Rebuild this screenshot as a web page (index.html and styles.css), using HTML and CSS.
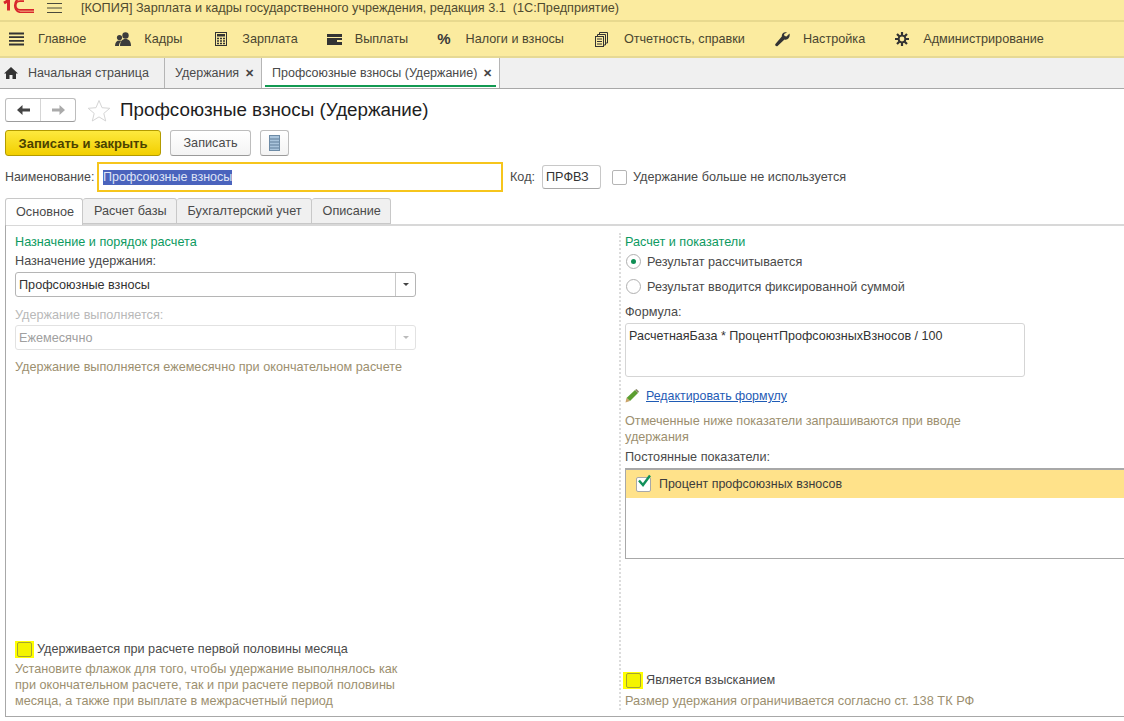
FILE: index.html
```html
<!DOCTYPE html>
<html lang="ru">
<head>
    <meta charset="UTF-8">
    <title>Профсоюзные взносы (Удержание)</title>
    <link rel="stylesheet" href="styles.css">
</head>
<body>
    <!-- Title bar -->
    <div class="titlebar">
        <svg class="logo" width="35" height="13" viewBox="0 0 35 13" fill="none" stroke="#d8262c">
            <path d="M4 3 8.500 .5V10.500" stroke-width="3"/>
            <path d="M24 1.200H20A4.300 4.300 0 0 0 20 9.800H34" stroke-width="1.800"/>
            <path d="M24 -1.500H20A7.200 7.200 0 0 0 20 12.300H34" stroke-width="1.800"/>
        </svg>
        <svg class="burger" width="15" height="12" viewBox="0 0 15 12"><path d="M0 1.500H15M0 6H15M0 10.500H15" stroke="#4a4a3c" stroke-width="1"/></svg>
        <span class="title-text">[КОПИЯ] Зарплата и кадры государственного учреждения, редакция 3.1&nbsp; (1С:Предприятие)</span>
    </div>

    <!-- Sections menu -->
    <div class="menubar">
        <div class="menu-item m1">
            <svg width="15" height="14" viewBox="0 0 15 14"><path d="M0 1.500H15M0 5.200H15M0 8.800H15M0 12.500H15" stroke="#333" stroke-width="1.800"/></svg>
            <span>Главное</span>
        </div>
        <div class="menu-item m2">
            <svg width="16" height="14" viewBox="0 0 16 14" fill="#3c3c3c"><circle cx="10.500" cy="3.500" r="3.200"/><path d="M5 14c0-4.500 2-7 5.500-7s5.500 2.500 5.500 7z"/><circle cx="4.500" cy="5.500" r="2.600"/><path d="M0 14c0-3.500 1.500-5.500 4.500-5.500.8 0 1.300.1 1.800.4C4.800 10 4 11.800 4 14z"/></svg>
            <span>Кадры</span>
        </div>
        <div class="menu-item m3">
            <svg width="12" height="14" viewBox="0 0 12 14"><rect x=".5" y=".5" width="11" height="13" fill="none" stroke="#333"/><rect x="2" y="2" width="8" height="2.500" fill="#333"/><path d="M2 6.500h2M5 6.500h2M8 6.500h2M2 9h2M5 9h2M8 9h2M2 11.500h2M5 11.500h2M8 11.500h2" stroke="#333" stroke-width="1.500"/></svg>
            <span>Зарплата</span>
        </div>
        <div class="menu-item m4">
            <svg width="15" height="11" viewBox="0 0 15 11"><path d="M0 0H15V3H0z" fill="#333"/><path d="M0 4H15V11H0z" fill="#333"/><path d="M10 6H15V8H10z" fill="#fbeb9f"/></svg>
            <span>Выплаты</span>
        </div>
        <div class="menu-item m5">
            <span class="percent">%</span>
            <span>Налоги и взносы</span>
        </div>
        <div class="menu-item m6">
            <svg width="13" height="15" viewBox="0 0 13 15" fill="none" stroke="#333"><path d="M4.500 2.500V.5H12.500V11H10.500"/><path d="M2.500 4.500V2.500H10.500V13H8.500"/><rect x=".5" y="4.500" width="8" height="10"/><path d="M2 7h5M2 9.500h5M2 12h5"/></svg>
            <span>Отчетность, справки</span>
        </div>
        <div class="menu-item m7">
            <svg width="15" height="15" viewBox="0 0 15 15"><path d="M14.500 1.500 11.500 4.500 9.500 4 9 2 12 .6C9.500-.5 6.500 1 6.800 4.500L.6 11.800C-.4 13 .5 14.600 2.300 14.200L9.500 7.500C13 8.500 15.500 5 14.500 1.500z" fill="#333"/></svg>
            <span>Настройка</span>
        </div>
        <div class="menu-item m8">
            <svg width="14" height="14" viewBox="0 0 14 14"><path d="M7 0v14M0 7h14M2 2l10 10M12 2 2 12" stroke="#333" stroke-width="2.200"/><circle cx="7" cy="7" r="4.300" fill="#333"/><circle cx="7" cy="7" r="2.400" fill="#fbeb9f"/></svg>
            <span>Администрирование</span>
        </div>
    </div>

    <!-- Open windows -->
    <div class="tabbar">
        <div class="wtab wtab-home">
            <svg width="14" height="12" viewBox="0 0 14 12"><path d="M7 0 14 6.500H12V12H8.500V8H5.500V12H2V6.500H0z" fill="#333"/></svg>
            <span>Начальная страница</span>
        </div>
        <div class="wtab wtab-list">
            <span>Удержания</span>
            <span class="close">✕</span>
        </div>
        <div class="wtab wtab-active">
            <span>Профсоюзные взносы (Удержание)</span>
            <span class="close">✕</span>
        </div>
    </div>

    <div class="form">
        <div class="form-head">
            <div class="nav-buttons">
                <div class="nav-btn">
                    <svg width="13" height="10" viewBox="0 0 13 10"><path d="M5.500 0 0 5l5.500 5V6.500H13v-3H5.500z" fill="#444"/></svg>
                </div>
                <div class="nav-btn">
                    <svg width="13" height="10" viewBox="0 0 13 10"><path d="M7.500 0 13 5l-5.500 5V6.500H0v-3h7.500z" fill="#aaa"/></svg>
                </div>
            </div>
            <svg class="star" width="24" height="23" viewBox="0 0 24 23"><path d="M12 1.500 15 8.700 22.800 9.300 16.800 14.400 18.700 22 12 17.900 5.300 22 7.200 14.400 1.200 9.300 9 8.700z" fill="#fff" stroke="#d5d5d5"/></svg>
            <h1>Профсоюзные взносы (Удержание)</h1>
        </div>

        <div class="actions">
            <button class="btn btn-main">Записать и закрыть</button>
            <button class="btn btn-save">Записать</button>
            <button class="btn btn-icon">
                <svg width="11" height="16" viewBox="0 0 11 16"><rect x=".5" y=".5" width="10" height="15" fill="#a9c4dc" stroke="#6d8ba6"/><path d="M1 4h9M1 7h9M1 10h9M1 13h9" stroke="#5f7d99"/></svg>
            </button>
        </div>

        <div class="name-row">
            <label class="name-label">Наименование:</label>
            <div class="name-input"><span class="selected">Профсоюзные взносы</span></div>
            <label class="code-label">Код:</label>
            <div class="code-input">ПРФВЗ</div>
            <span class="check"></span>
            <span class="check-label">Удержание больше не используется</span>
        </div>

        <div class="page-tabs">
            <div class="ptab ptab-active">Основное</div>
            <div class="ptab">Расчет базы</div>
            <div class="ptab">Бухгалтерский учет</div>
            <div class="ptab">Описание</div>
        </div>

        <div class="panel">
            <div class="col col-left">
                <div class="group-title">Назначение и порядок расчета</div>
                <div class="field-label">Назначение удержания:</div>
                <div class="select">
                    <span class="select-value">Профсоюзные взносы</span>
                    <span class="select-arrow"></span>
                </div>
                <div class="field-label label-off">Удержание выполняется:</div>
                <div class="select select-off">
                    <span class="select-value">Ежемесячно</span>
                    <span class="select-arrow"></span>
                </div>
                <div class="hint hint-period">Удержание выполняется ежемесячно при окончательном расчете</div>

                <div class="bottom-left">
                    <div class="mark-row">
                        <span class="mark"><span class="check"></span></span>
                        <span>Удерживается при расчете первой половины месяца</span>
                    </div>
                    <div class="hint hint-multi">Установите флажок для того, чтобы удержание выполнялось как при окончательном расчете, так и при расчете первой половины месяца, а также при выплате в межрасчетный период</div>
                </div>
            </div>

            <div class="col col-right">
                <div class="group-title">Расчет и показатели</div>
                <div class="radio-row"><span class="radio radio-on"></span><span>Результат рассчитывается</span></div>
                <div class="radio-row"><span class="radio"></span><span>Результат вводится фиксированной суммой</span></div>
                <div class="field-label formula-label">Формула:</div>
                <div class="formula">РасчетнаяБаза * ПроцентПрофсоюзныхВзносов / 100</div>
                <div class="edit-row">
                    <svg width="14" height="14" viewBox="0 0 14 14"><path d="M10 1 13 4 5 12 1.500 9z" fill="#5c9e31"/><path d="M10 1 11.500 0 14 2.500 13 4z" fill="#8a8a6a"/><path d="M1.500 9 5 12 .5 13.500z" fill="#caa46a"/></svg>
                    <a class="link">Редактировать формулу</a>
                </div>
                <div class="hint hint-params">Отмеченные ниже показатели запрашиваются при вводе удержания</div>
                <div class="field-label const-label">Постоянные показатели:</div>
                <div class="params">
                    <div class="param-row">
                        <span class="param-check">
                            <svg width="16" height="15" viewBox="0 0 16 15"><path d="M3 6.500 7 11 14 1.500" fill="none" stroke="#12915a" stroke-width="2.400"/></svg>
                        </span>
                        <span>Процент профсоюзных взносов</span>
                    </div>
                </div>

                <div class="bottom-right">
                    <div class="mark-row">
                        <span class="mark"><span class="check"></span></span>
                        <span>Является взысканием</span>
                    </div>
                    <div class="hint hint-limit">Размер удержания ограничивается согласно ст. 138 ТК РФ</div>
                </div>
            </div>
        </div>
    </div>
</body>
</html>
```

FILE: styles.css
```css
html, body {
    margin: 0;
    padding: 0;
    height: 100%;
}
body {
    width: 1124px;
    height: 721px;
    overflow: hidden;
    background: #fff;
    color: #4a4a4a;
    font-family: "Liberation Sans", Arial, sans-serif;
    font-size: 12.67px;
    display: flex;
    flex-direction: column;
}

/* title bar */
.titlebar {
    height: 15px;
    padding-bottom: 5px;
    background: #fbeb9f;
    border-bottom: 2px solid #e8d98e;
    display: flex;
    align-items: center;
    flex: none;
}
.logo {
    align-self: flex-start;
}
.burger {
    margin-left: 12px;
}
.title-text {
    margin-left: 19px;
    color: #4f4a30;
}

/* sections */
.menubar {
    height: 34px;
    background: #fbeb9f;
    border-bottom: 2px solid #e6d995;
    display: flex;
    align-items: center;
    flex: none;
    color: #4a4630;
}
.menu-item {
    display: flex;
    align-items: center;
}
.m1 { margin-left: 9px; }
.m1 svg { margin-right: 14px; }
.m2 { margin-left: 29px; }
.m2 svg { margin-right: 13px; }
.m3 { margin-left: 33px; }
.m3 svg { margin-right: 15px; }
.m4 { margin-left: 29px; }
.m4 svg { margin-right: 13px; }
.m5 { margin-left: 29px; }
.percent {
    font-size: 15px;
    font-weight: bold;
    color: #3a3a3a;
    margin-right: 15px;
    margin-bottom: 2px;
}
.m6 { margin-left: 31px; }
.m6 svg { margin-right: 16px; }
.m7 { margin-left: 30px; }
.m7 svg { margin-right: 13px; }
.m8 { margin-left: 30px; }
.m8 svg { margin-right: 14px; }

/* open windows */
.tabbar {
    height: 30px;
    background: #f0f0f0;
    border-bottom: 1px solid #a8a8a8;
    display: flex;
    flex: none;
    font-size: 12.5px;
}
.wtab {
    display: flex;
    align-items: center;
    border-right: 1px solid #b5b5b5;
    box-sizing: border-box;
    color: #4a4a4a;
}
.wtab-home {
    width: 165px;
    padding-left: 4px;
}
.wtab-home svg {
    margin-right: 10px;
}
.wtab-list {
    width: 97px;
    padding-left: 10px;
}
.wtab-active {
    width: 238px;
    padding-left: 10px;
    background: #fff;
    position: relative;
}
.wtab-active::after {
    content: "";
    position: absolute;
    left: 3px;
    right: 3px;
    bottom: 1px;
    height: 2px;
    background: #129a52;
}
.close {
    margin-left: 6px;
    font-size: 11px;
    font-weight: bold;
    color: #444;
}

/* form */
.form {
    flex: 1;
    display: flex;
    flex-direction: column;
    padding: 0 0 4px 5px;
    min-height: 0;
}
.form-head {
    height: 40px;
    display: flex;
    align-items: center;
    padding-top: 2px;
    box-sizing: border-box;
    flex: none;
}
.nav-buttons {
    display: flex;
    width: 71px;
    height: 24px;
    border: 1px solid #bdbdbd;
    border-bottom-color: #9c9c9c;
    border-radius: 3px;
    box-sizing: border-box;
    background: #fff;
}
.nav-btn {
    flex: 1;
    display: flex;
    align-items: center;
    justify-content: center;
}
.nav-btn + .nav-btn {
    border-left: 1px solid #d5d5d5;
}
.star {
    margin-left: 11px;
}
h1 {
    margin: 0 0 0 9px;
    font-size: 18.8px;
    font-weight: normal;
    color: #1e1e1e;
}

.actions {
    display: flex;
    height: 26px;
    margin-top: 1px;
    flex: none;
}
.btn {
    font-family: inherit;
    font-size: 12.67px;
    box-sizing: border-box;
    height: 26px;
    padding: 0;
    border: 1px solid #bdbdbd;
    border-bottom-color: #9a9a9a;
    border-radius: 3px;
    background: linear-gradient(#fff, #f3f3f3);
    color: #4a4a4a;
}
.btn-main {
    width: 156px;
    border-color: #b39b00;
    background: linear-gradient(#fde93e, #f2cf00);
    font-weight: bold;
    font-size: 13px;
    color: #4b4200;
}
.btn-save {
    width: 81px;
    margin-left: 9px;
}
.btn-icon {
    width: 29px;
    margin-left: 9px;
    display: flex;
    align-items: center;
    justify-content: center;
}

.name-row {
    display: flex;
    align-items: center;
    height: 30px;
    margin-top: 6px;
    flex: none;
}
.name-label {
    width: 92px;
    font-size: 12.4px;
}
.name-input {
    width: 398px;
    height: 26px;
    border: 2px solid #f6c51c;
    display: flex;
    align-items: center;
    padding-left: 4px;
    font-size: 12.5px;
}
.selected {
    background: #4a63bd;
    color: #dfe4f5;
    line-height: 15px;
}
.code-label {
    margin-left: 7px;
    width: 32px;
}
.code-input {
    box-sizing: border-box;
    width: 59px;
    height: 24px;
    border: 1px solid #c8c8c8;
    border-bottom-color: #a8a8a8;
    border-radius: 3px;
    display: flex;
    align-items: center;
    padding-left: 3px;
    color: #333;
}
.check {
    box-sizing: border-box;
    width: 15px;
    height: 15px;
    border: 1px solid #b5b5b5;
    border-radius: 2px;
    background: #fff;
    flex: none;
}
.name-row .check {
    margin-left: 11px;
}
.check-label {
    margin-left: 6px;
}

/* page tabs */
.page-tabs {
    display: flex;
    height: 27px;
    margin-top: 6px;
    position: relative;
    z-index: 1;
    flex: none;
}
.ptab {
    box-sizing: border-box;
    height: 26px;
    padding: 0 9px 0 11px;
    display: flex;
    align-items: center;
    background: #f0f0f0;
    border: 1px solid #c8c8c8;
    border-left: none;
    border-radius: 3px 3px 0 0;
}
.ptab-active {
    width: 78px;
    height: 27px;
    background: #fff;
    border: 1px solid #c8c8c8;
    border-bottom: none;
    padding: 0 0 1px 10px;
}

.panel {
    flex: 1;
    min-height: 0;
    display: flex;
    border-top: 2px solid #d8d8d8;
    border-left: 1px solid #a8a8a8;
    border-bottom: 1px solid #a8a8a8;
    margin-top: -1px;
}
.col {
    display: flex;
    flex-direction: column;
    box-sizing: border-box;
}
.col-left {
    width: 615px;
    margin: 7px 0 6px;
    padding: 2px 0 1px 9px;
    border-right: 2px dotted #dcdcdc;
}
.col-right {
    flex: 1;
    padding: 9px 0 7px 4px;
    min-width: 0;
}
.group-title {
    color: #0d9a5f;
    line-height: 14px;
}
.field-label {
    line-height: 14px;
    margin-top: 5px;
}
.label-off {
    color: #b9b9b9;
    margin-top: 11px;
}
.select {
    box-sizing: border-box;
    width: 401px;
    height: 25px;
    margin-top: 4px;
    border: 1px solid #b5b5b5;
    border-radius: 3px;
    display: flex;
    align-items: center;
    color: #333;
}
.select-value {
    flex: 1;
    padding-left: 3px;
}
.select-arrow {
    width: 19px;
    height: 100%;
    border-left: 1px solid #c8c8c8;
    display: flex;
    align-items: center;
    justify-content: center;
}
.select-arrow::after {
    content: "";
    border: 3px solid transparent;
    border-top: 3px solid #444;
    margin-top: 3px;
}
.select-off {
    border-color: #e2e2e2;
    color: #a0a0a0;
    margin-top: 3px;
}
.select-off .select-arrow {
    border-left-color: #e2e2e2;
}
.select-off .select-arrow::after {
    border-top-color: #bbb;
}
.hint {
    color: #9c8f6f;
    line-height: 16px;
}
.hint-period {
    margin-top: 9px;
}
.bottom-left {
    margin-top: auto;
}
.hint-multi {
    width: 385px;
    margin-top: 4px;
}
.hint-limit {
    font-size: 12.8px;
}
.mark-row {
    display: flex;
    align-items: center;
    height: 16px;
}
.mark {
    display: flex;
    align-items: center;
    justify-content: center;
    width: 19px;
    height: 17px;
    background: #ffff00;
    margin-right: 3px;
}
.mark .check {
    background: #f4f400;
    border-color: #a5a530;
}

/* right column */
.radio-row {
    display: flex;
    align-items: center;
    height: 25px;
}
.radio {
    box-sizing: border-box;
    width: 15px;
    height: 15px;
    border: 1px solid #b0b0b0;
    border-radius: 50%;
    margin-left: 1px;
    margin-right: 6px;
    background: #fff;
    position: relative;
}
.radio-on::after {
    content: "";
    position: absolute;
    left: 4px;
    top: 4px;
    width: 5px;
    height: 5px;
    border-radius: 50%;
    background: #0f8f55;
}
.formula-label {
    margin-top: 6px;
}
.formula {
    box-sizing: border-box;
    width: 400px;
    height: 54px;
    margin-top: 4px;
    padding: 5px 3px;
    border: 1px solid #d5d5d5;
    border-radius: 3px;
    color: #333;
    line-height: 14px;
    font-size: 12.55px;
}
.edit-row {
    display: flex;
    align-items: center;
    margin-top: 12px;
    height: 14px;
}
.edit-row svg {
    margin-right: 7px;
}
.link {
    color: #1f5bb5;
    text-decoration: underline;
    font-size: 12.4px;
}
.hint-params {
    width: 350px;
    margin-top: 10px;
}
.const-label {
    margin-top: 5px;
}
.params {
    box-sizing: border-box;
    height: 91px;
    margin-top: 4px;
    border: 1px solid #a8a8a8;
    border-top-width: 2px;
    border-right: none;
}
.param-row {
    height: 28px;
    background: #ffe28a;
    display: flex;
    align-items: center;
    color: #3c3c3c;
    font-size: 12.45px;
}
.param-check {
    box-sizing: border-box;
    width: 15px;
    height: 15px;
    margin-left: 10px;
    margin-right: 8px;
    background: #fff;
    border: 1px solid #a8a8a8;
    border-radius: 2px;
    position: relative;
}
.param-check svg {
    position: absolute;
    left: -1px;
    top: -4px;
}
.bottom-right {
    margin-top: auto;
}
.bottom-right .mark-row {
    margin-bottom: 5px;
}
.bottom-right .mark {
    margin-left: -2px;
    margin-right: 3px;
    width: 20px;
}
```
